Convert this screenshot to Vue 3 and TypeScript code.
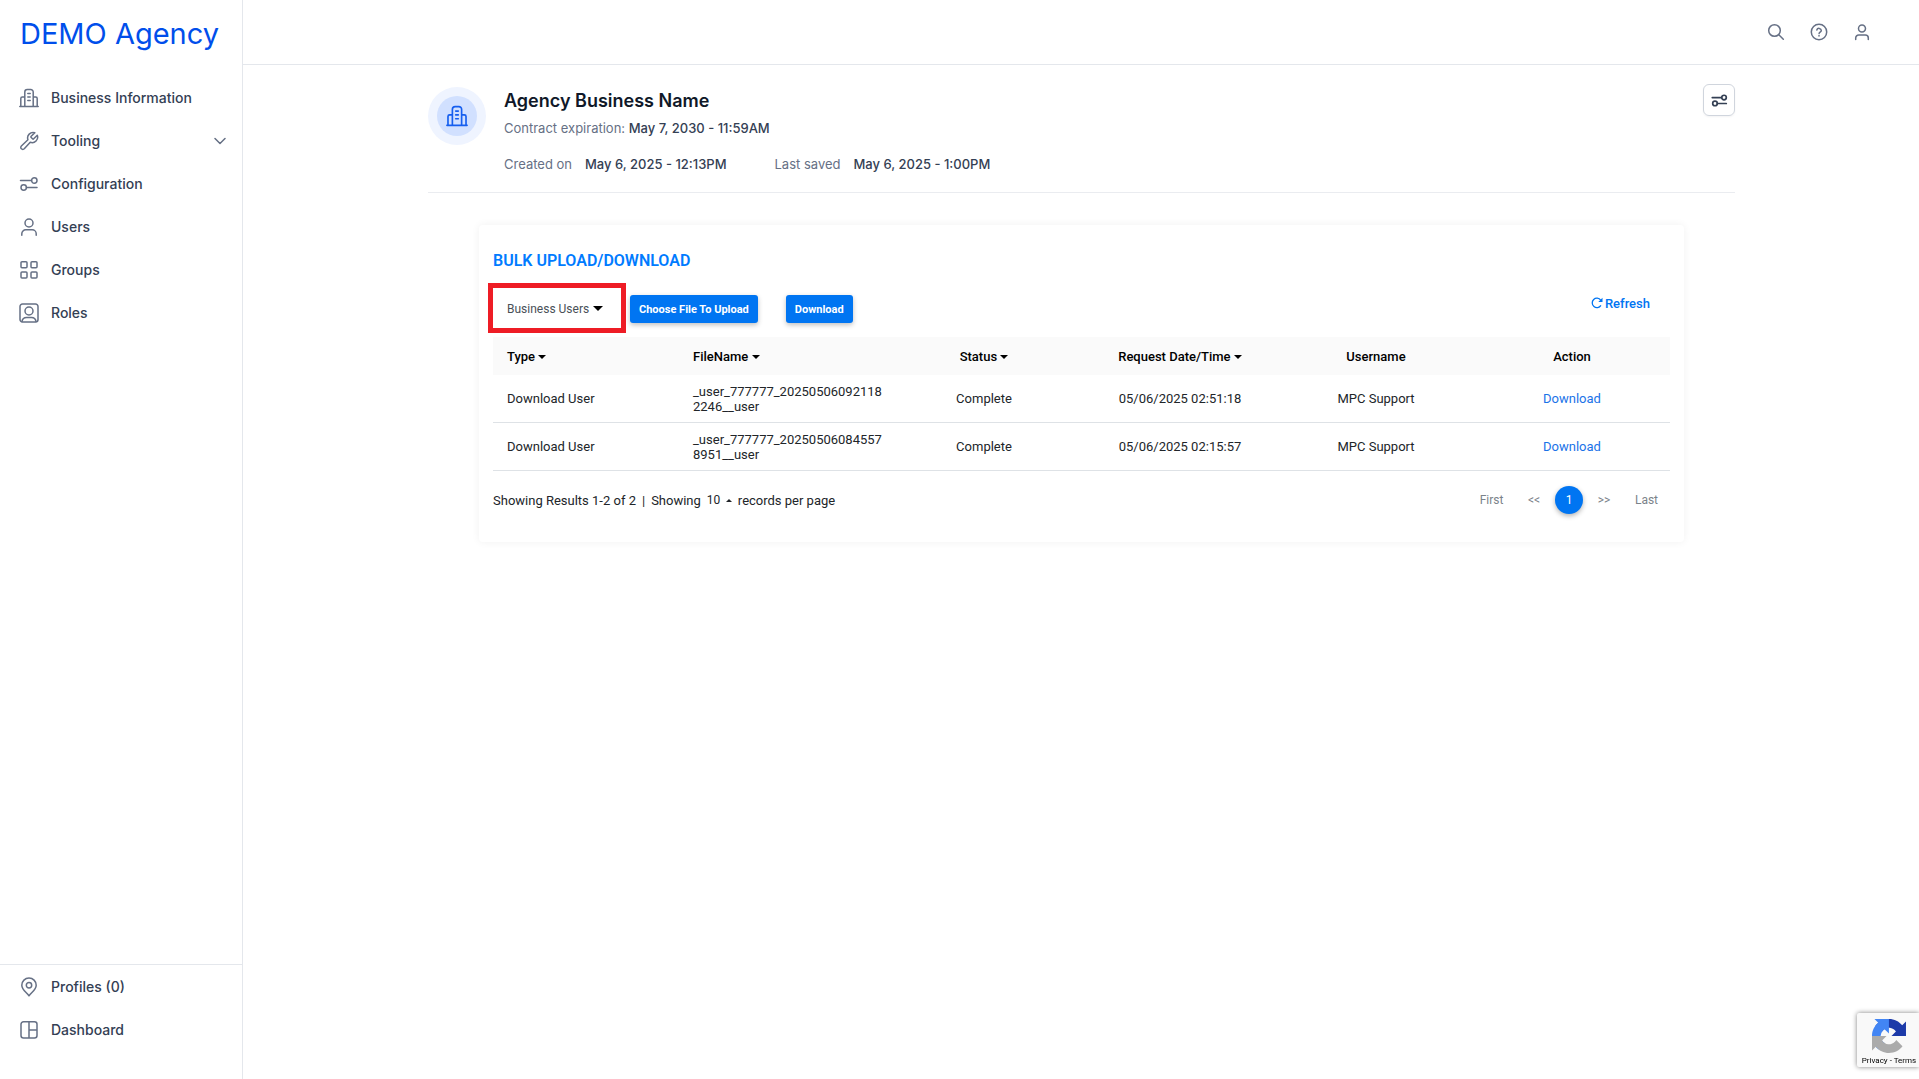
<script setup lang="ts">
import { ref } from 'vue'

type Shape = { d: string }
interface NavItem { label: string; icon: string; expandable?: boolean }
interface Job { id: number; type: string; file: string; status: string; date: string; user: string }

const icons: Record<string, Shape[]> = {
  building: [
    { d: 'M.8 18.500h18.400M5.800 18.500V4a2.500 2.500 0 0 1 2.500-2.500h3.400A2.500 2.500 0 0 1 14.200 4v14.500M5.800 9H3.300a1.500 1.500 0 0 0-1.500 1.500v8M14.200 9h2.500a1.500 1.500 0 0 1 1.500 1.500v8' },
    { d: 'M8.800 5.500h2.400M8.800 9h2.400M8.800 12.500h2.400' },
  ],
  wrench: [
    { d: 'M12.200 5.300a.83.83 0 0 0 0 1.170l1.330 1.330a.83.83 0 0 0 1.170 0l3.600-3.600a5.500 5.500 0 0 1-7.070 7.070l-5.960 6.560a2.050 2.050 0 0 1-2.900-2.900l6.560-6.160a5.500 5.500 0 0 1 6.870-7.070z' },
  ],
  sliders: [
    { d: 'M1.500 6.500h11M7.500 13.500h10.500' },
    { d: 'M18 6.500a2.700 2.700 0 1 1-5.400 0a2.700 2.700 0 1 1 5.400 0M7.400 13.500a2.700 2.700 0 1 1-5.400 0a2.700 2.700 0 1 1 5.400 0' },
  ],
  user: [
    { d: 'M14 6a4 4 0 1 1-8 0a4 4 0 1 1 8 0M2.800 18.300v-1.500a4 4 0 0 1 4-4h6.400a4 4 0 0 1 4 4v1.500' },
  ],
  grid: [
    { d: 'M3 1.700h4a1 1 0 0 1 1 1v4a1 1 0 0 1-1 1H3a1 1 0 0 1-1-1v-4a1 1 0 0 1 1-1zM13 1.700h4a1 1 0 0 1 1 1v4a1 1 0 0 1-1 1h-4a1 1 0 0 1-1-1v-4a1 1 0 0 1 1-1zM3 12h4a1 1 0 0 1 1 1v4a1 1 0 0 1-1 1H3a1 1 0 0 1-1-1v-4a1 1 0 0 1 1-1zM13 12h4a1 1 0 0 1 1 1v4a1 1 0 0 1-1 1h-4a1 1 0 0 1-1-1v-4a1 1 0 0 1 1-1z' },
  ],
  role: [
    { d: 'M3.500 1h13A2.500 2.500 0 0 1 19 3.500v13a2.500 2.500 0 0 1-2.500 2.500h-13A2.500 2.500 0 0 1 1 16.500v-13A2.500 2.500 0 0 1 3.500 1z' },
    { d: 'M14 8a4 4 0 1 1-8 0a4 4 0 1 1 8 0M3 18.500c.4-2.600 1.800-4 4.500-4h5c2.700 0 4.100 1.400 4.500 4' },
  ],
  pin: [
    { d: 'M10 18.800C8 15.700 2.800 13 2.800 8.200a7.200 7.200 0 0 1 14.400 0C17.200 13 12 15.700 10 18.800z' },
    { d: 'M12.700 8.200a2.700 2.700 0 1 1-5.400 0a2.700 2.700 0 1 1 5.400 0' },
  ],
  dashboard: [
    { d: 'M4.500 1.700h11A2.500 2.500 0 0 1 18 4.200v11.300a2.500 2.500 0 0 1-2.500 2.500h-11A2.500 2.500 0 0 1 2 15.500V4.200a2.500 2.500 0 0 1 2.500-2.500zM10 1.700V18M10 10h8' },
  ],
}

const mainNav: NavItem[] = [
  { label: 'Business Information', icon: 'building' },
  { label: 'Tooling', icon: 'wrench', expandable: true },
  { label: 'Configuration', icon: 'sliders' },
  { label: 'Users', icon: 'user' },
  { label: 'Groups', icon: 'grid' },
  { label: 'Roles', icon: 'role' },
]
const footNav: NavItem[] = [
  { label: 'Profiles (0)', icon: 'pin' },
  { label: 'Dashboard', icon: 'dashboard' },
]

const jobs: Job[] = [
  { id: 1, type: 'Download User', file: '_user_777777_202505060921182246__user', status: 'Complete', date: '05/06/2025 02:51:18', user: 'MPC Support' },
  { id: 2, type: 'Download User', file: '_user_777777_202505060845578951__user', status: 'Complete', date: '05/06/2025 02:15:57', user: 'MPC Support' },
]

const uploadType = ref('Business Users')
const pageSize = ref('10')
</script>

<template>
  <div class="app">
    <aside class="sidebar">
      <a class="brand" href="#">DEMO Agency</a>
      <nav class="nav" aria-label="Main">
        <a v-for="item in mainNav" :key="item.label" class="nav-link" href="#">
          <svg class="icon" viewBox="0 0 20 20" aria-hidden="true">
            <path v-for="(s, i) in icons[item.icon]" :key="i" :d="s.d" />
          </svg>
          <span class="nav-label">{{ item.label }}</span>
          <svg v-if="item.expandable" class="chevron" viewBox="0 0 12 12" aria-hidden="true"><path d="M1 3.500l5 5 5-5" /></svg>
        </a>
      </nav>
      <nav class="nav foot" aria-label="Secondary">
        <a v-for="item in footNav" :key="item.label" class="nav-link" href="#">
          <svg class="icon" viewBox="0 0 20 20" aria-hidden="true">
            <path v-for="(s, i) in icons[item.icon]" :key="i" :d="s.d" />
          </svg>
          <span class="nav-label">{{ item.label }}</span>
        </a>
      </nav>
    </aside>

    <div class="page">
      <header class="topbar">
        <button type="button" class="icon-button" aria-label="Search">
          <svg viewBox="0 0 18 18"><circle cx="7.500" cy="7.500" r="5.800" /><path d="M11.800 11.800l4.500 4.500" /></svg>
        </button>
        <button type="button" class="icon-button" aria-label="Help">
          <svg viewBox="0 0 18 18"><circle cx="9" cy="9" r="7.700" /><path d="M6.800 7a2.300 2.300 0 0 1 4.500.6c0 1.500-2.200 1.700-2.200 2.900M9 12.600v.3" /></svg>
        </button>
        <button type="button" class="icon-button" aria-label="Account">
          <svg viewBox="0 0 18 18"><path d="M12.500 5.500a3.500 3.500 0 1 1-7 0a3.500 3.500 0 1 1 7 0M2.700 16.500v-1.500a3 3 0 0 1 3-3h6.600a3 3 0 0 1 3 3v1.500" /></svg>
        </button>
      </header>

      <main class="content">
        <section class="agency">
          <div class="avatar">
            <div class="avatar-core">
              <svg class="icon" viewBox="0 0 20 20" aria-hidden="true">
                <path v-for="(s, i) in icons.building" :key="i" :d="s.d" />
              </svg>
            </div>
          </div>
          <div class="agency-info">
            <h1>Agency Business Name</h1>
            <p class="expiry">Contract expiration: <strong>May 7, 2030 - 11:59AM</strong></p>
            <dl class="dates">
              <div><dt>Created on</dt><dd>May 6, 2025 - 12:13PM</dd></div>
              <div><dt>Last saved</dt><dd>May 6, 2025 - 1:00PM</dd></div>
            </dl>
          </div>
          <button type="button" class="settings" aria-label="Settings">
            <svg class="icon" viewBox="0 0 20 20" aria-hidden="true">
              <path v-for="(s, i) in icons.sliders" :key="i" :d="s.d" />
            </svg>
          </button>
        </section>

        <section class="card">
          <h2>BULK UPLOAD/DOWNLOAD</h2>
          <div class="toolbar">
            <div class="type-picker">
              <select v-model="uploadType" aria-label="Upload type">
                <option>Business Users</option>
              </select>
              <span class="caret large"></span>
            </div>
            <button type="button" class="action">Choose File To Upload</button>
            <button type="button" class="action">Download</button>
            <button type="button" class="refresh">
              <svg viewBox="0 0 12 12" aria-hidden="true"><path d="M9.900 8.400A4.700 4.700 0 1 1 9.700 3.100" /><path class="tip" d="M11.500.8v4.200H7.300z" /></svg>
              Refresh
            </button>
          </div>

          <table>
            <colgroup><col class="c-type" /><col class="c-file" /><col /><col /><col /><col /></colgroup>
            <thead>
              <tr>
                <th class="start">Type <span class="caret"></span></th>
                <th class="start">FileName <span class="caret"></span></th>
                <th>Status <span class="caret"></span></th>
                <th>Request Date/Time <span class="caret"></span></th>
                <th>Username</th>
                <th>Action</th>
              </tr>
            </thead>
            <tbody>
              <tr v-for="job in jobs" :key="job.id">
                <td class="start">{{ job.type }}</td>
                <td class="start file">{{ job.file }}</td>
                <td>{{ job.status }}</td>
                <td>{{ job.date }}</td>
                <td>{{ job.user }}</td>
                <td><a href="#">Download</a></td>
              </tr>
            </tbody>
          </table>

          <div class="table-foot">
            <div class="summary">
              <span>Showing Results 1-2 of 2</span>
              <span>|</span>
              <label for="page-size">Showing</label>
              <div class="size-picker">
                <select id="page-size" v-model="pageSize">
                  <option>10</option>
                </select>
                <span class="caret up"></span>
              </div>
              <span>records per page</span>
            </div>
            <nav class="pager" aria-label="Pagination">
              <button type="button" class="edge">First</button>
              <button type="button">&lt;&lt;</button>
              <button type="button" class="current">1</button>
              <button type="button">&gt;&gt;</button>
              <button type="button" class="edge">Last</button>
            </nav>
          </div>
        </section>
      </main>
    </div>

    <div class="captcha">
      <svg viewBox="0 0 64 64" aria-hidden="true">
        <path fill="#1c3aa9" d="M64 31.955l-.033-1.370V4.687l-7.160 7.160C50.948 4.674 42.033.093 32.050.093c-10.400 0-19.622 4.960-25.458 12.640l11.736 11.860a15.550 15.550 0 0 1 4.754-5.334c2.050-1.600 4.952-2.906 8.968-2.906.485 0 .86.057 1.135.163 4.976.393 9.288 3.140 11.828 7.124l-8.307 8.307L64 31.953" />
        <path fill="#4285f4" d="M31.862.094l-1.370.033H4.594l7.160 7.160C4.580 13.147 0 22.060 0 32.046c0 10.400 4.960 19.622 12.640 25.458L24.500 45.768a15.550 15.550 0 0 1-5.334-4.754c-1.600-2.050-2.906-4.952-2.906-8.968 0-.485.057-.86.163-1.135.393-4.976 3.140-9.288 7.124-11.828l8.307 8.307L31.860.095" />
        <path fill="#ababab" d="M.001 32.045l.033 1.370v25.898l7.160-7.160c5.860 7.173 14.774 11.754 24.760 11.754 10.400 0 19.622-4.960 25.458-12.640l-11.736-11.860a15.550 15.550 0 0 1-4.754 5.334c-2.050 1.600-4.952 2.906-8.968 2.906-.485 0-.86-.057-1.135-.163-4.976-.393-9.288-3.140-11.828-7.124l8.307-8.307L.001 32.046" />
      </svg>
      <p><a href="#">Privacy</a> - <a href="#">Terms</a></p>
    </div>
  </div>
</template>

<style>
body { margin: 0; background: #fff; }
</style>

<style scoped>
* { box-sizing: border-box; }
a { text-decoration: none; color: inherit; }
h1, h2, p, dl, dd { margin: 0; }
button { font: inherit; border: 0; padding: 0; background: none; cursor: pointer; }
svg { display: block; fill: none; stroke: currentColor; stroke-width: 1.5; stroke-linecap: round; stroke-linejoin: round; }
select { appearance: none; border: 0; padding: 0; background: none; font: inherit; color: inherit; }

.app { display: flex; min-height: 100vh; font-family: Inter, "Liberation Sans", sans-serif; color: #344054; }
.sidebar { display: flex; flex-direction: column; flex: 0 0 243px; border-right: 1px solid #e4e7ec; }
.brand { padding: 16px 20px 24px; font-size: 29px; line-height: 36px; color: #004eeb; }
.nav { display: flex; flex-direction: column; }
.nav-link { display: flex; align-items: center; gap: 12px; height: 43px; padding: 0 16px 0 19px; font-size: 14px; font-weight: 500; color: #344054; }
.icon { width: 20px; height: 20px; color: #667085; }
.nav-label { flex: 1; }
.chevron { width: 12px; height: 12px; color: #667085; }
.foot { margin-top: auto; padding-bottom: 28px; border-top: 1px solid #e4e7ec; }

.page { flex: 1; min-width: 0; }
.topbar { display: flex; justify-content: flex-end; align-items: center; gap: 25px; height: 65px; padding-right: 48px; border-bottom: 1px solid #e4e7ec; color: #667085; }
.icon-button { color: #667085; }
.icon-button svg { width: 18px; height: 18px; }

.content { margin: 0 184px 0 185px; }
.agency { display: flex; align-items: flex-start; padding: 19px 0 18px; border-bottom: 1px solid #eaecf0; font-size: 13px; line-height: 20px; }
.avatar { display: grid; place-items: center; width: 58px; height: 58px; margin: 3px 18px 0 0; border-radius: 50%; background: #eff4ff; }
.avatar-core { display: grid; place-items: center; width: 40px; height: 40px; border-radius: 50%; background: #d1e0ff; }
.avatar .icon { width: 22px; height: 22px; color: #155eef; }
.agency-info { flex: 1; padding-top: 4px; }
h1 { font-size: 18px; line-height: 26px; font-weight: 600; color: #101828; }
.expiry { padding-top: 4px; color: #667085; }
.expiry strong { font-weight: 500; color: #344054; }
.dates { display: flex; gap: 48px; padding-top: 16px; }
.dates div { display: flex; gap: 13px; }
dt { color: #667085; }
dd { font-weight: 500; color: #344054; }
.settings { display: grid; place-items: center; width: 32px; height: 32px; border: 1px solid #d0d5dd; border-radius: 6px; box-shadow: 0 1px 2px rgba(16, 24, 40, 0.05); }
.settings .icon { width: 17px; height: 17px; color: #344054; stroke-width: 2; }

.card { margin: 32px 51px 0; padding: 24px 14px 28px; border-radius: 4px; box-shadow: 0 0 8px rgba(0, 0, 0, 0.06); font-family: Roboto, "Liberation Sans", sans-serif; font-size: 13px; line-height: 15px; color: #212529; }
h2 { font-size: 16px; line-height: 24px; font-weight: 600; color: #007bff; }
.toolbar { display: flex; align-items: center; padding: 22px 0 14px; }
.type-picker { position: relative; width: 137px; height: 28px; padding-left: 14px; }
.type-picker::after { content: ""; position: absolute; inset: -12px 4px -10px -5px; border: 5px solid #ee1c25; pointer-events: none; }
.type-picker select { width: 100%; height: 28px; font-size: 12px; color: #495057; }
.caret { display: inline-block; border: 4px solid transparent; border-top-color: #000; border-bottom: 0; vertical-align: 2px; }
.caret.large { position: absolute; left: 100px; top: 11px; border-width: 5px; border-bottom: 0; pointer-events: none; }
.action { height: 28px; padding: 0 9px; margin-right: 28px; border-radius: 3px; background: #0075f2; color: #fff; font-size: 11px; font-weight: 700; box-shadow: 0 2px 5px rgba(0, 0, 0, 0.25); }
.refresh { display: flex; align-items: center; gap: 2px; margin: 0 20px 12px auto; color: #0075f2; font-weight: 500; }
.refresh svg { width: 12px; height: 12px; stroke-width: 1.3; stroke-linecap: butt; }
.refresh .tip { fill: currentColor; stroke: none; }

table { width: 100%; table-layout: fixed; border-spacing: 0; }
.c-type { width: 186px; }
.c-file { width: 207px; }
th { height: 38px; padding: 0 14px; background: #fafafa; color: #000; font-weight: 500; text-align: center; }
td { height: 48px; padding: 8px 4px 8px 14px; border-bottom: 1px solid #dee2e6; text-align: center; }
td:not(.start) { padding: 8px 14px; }
.start { text-align: left; }
.file { word-break: break-all; }
td a { color: #1a73e8; }

.table-foot { display: flex; justify-content: space-between; align-items: center; padding-top: 15px; }
.summary { display: flex; align-items: center; gap: 6px; }
.size-picker { position: relative; width: 25px; }
.size-picker select { width: 25px; font-size: 12px; }
.caret.up { position: absolute; right: 0; top: 7px; border: 3px solid transparent; border-bottom-color: #212529; border-top: 0; pointer-events: none; }
.pager { display: flex; align-items: center; gap: 7px; padding-right: 2px; font-size: 12px; }
.pager button { width: 28px; height: 28px; color: #7b838a; }
.pager .edge { width: 43px; }
.pager .current { border-radius: 50%; background: #0075f2; color: #fff; box-shadow: 0 2px 5px rgba(0, 0, 0, 0.3); }

.captcha { position: fixed; right: 0; bottom: 12px; width: 62px; height: 54px; padding: 6px 0 0 2px; border-radius: 2px 0 0 2px; background: #f9f9f9; box-shadow: 0 0 5px #808080; font-family: Roboto, "Liberation Sans", sans-serif; font-size: 8px; line-height: 10px; text-align: center; color: #000; }
.captcha svg { width: 34px; height: 34px; margin: 0 auto 3px; stroke: none; }
</style>
